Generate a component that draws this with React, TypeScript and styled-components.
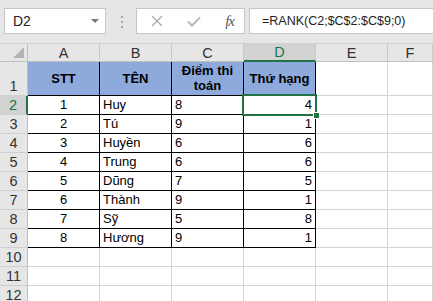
import React from "react";
import styled, { createGlobalStyle } from "styled-components";

const GREEN = "#217346";
const GRID = "#d4d4d4";
const HEAD_BG = "#e6e6e6";
const FONT = `"Liberation Sans", Arial, sans-serif`;

const GlobalStyle = createGlobalStyle`
  html, body {
    margin: 0;
    padding: 0;
    background: #fff;
    overflow: hidden;
  }
  body {
    font-family: ${FONT};
  }
`;

const Window = styled.div`
  width: 433px;
  height: 301px;
  overflow: hidden;
  display: flex;
  flex-direction: column;
  background: #fff;
`;

const FormulaBar = styled.div`
  height: 43px;
  flex: none;
  box-sizing: border-box;
  background: ${HEAD_BG};
  display: flex;
  align-items: flex-start;
  padding: 8px 0 0 4px;
`;

const Field = styled.div`
  height: 26px;
  box-sizing: border-box;
  background: #fff;
  border: 1px solid #c6c6c6;
  display: flex;
  align-items: center;
  font-size: 14px;
  color: #222;
`;

const NameBox = styled(Field)`
  width: 102px;
  flex: none;
  padding: 0 6px 0 8px;
  justify-content: space-between;
`;

const DropArrow = styled.span`
  width: 0;
  height: 0;
  border-left: 4px solid transparent;
  border-right: 4px solid transparent;
  border-top: 4px solid #777;
`;

const Grip = styled.div`
  flex: none;
  display: flex;
  flex-direction: column;
  gap: 3px;
  margin: 8px 13px 0 15px;
  span {
    width: 2px;
    height: 2px;
    background: #a8a8a8;
  }
`;

const ButtonBox = styled(Field)`
  width: 109px;
  flex: none;
  padding: 0 10px 0 14px;
  justify-content: space-between;
`;

const Fx = styled.span`
  font-family: "Liberation Serif", "Times New Roman", serif;
  font-style: italic;
  font-size: 15px;
  color: #555;
  letter-spacing: -1px;
`;

const FormulaInput = styled(Field)`
  flex: 1;
  margin-left: 4px;
  padding-left: 12px;
  border-right: none;
  white-space: nowrap;
  font-size: 12.5px;
`;

const Sheet = styled.div`
  display: grid;
  grid-template-columns: 28px repeat(5, 72px) 1fr;
  grid-template-rows: 19px 34px repeat(11, 19px);
  font-size: 13px;
  color: #000;
`;

const Corner = styled.div`
  position: relative;
  background: ${HEAD_BG};
  border-right: 1px solid #bfbfbf;
  border-bottom: 1px solid #bfbfbf;
  border-top: 1px solid #d0d0d0;
  &::after {
    content: "";
    position: absolute;
    right: 3px;
    bottom: 3px;
    border-left: 11px solid transparent;
    border-bottom: 11px solid #b4b4b4;
  }
`;

const ColHead = styled.div<{ $active?: boolean }>`
  box-sizing: border-box;
  display: flex;
  align-items: center;
  justify-content: center;
  background: ${({ $active }) => ($active ? "#d2d2d2" : HEAD_BG)};
  color: ${({ $active }) => ($active ? GREEN : "#333")};
  border-top: 1px solid #d0d0d0;
  border-right: 1px solid #c8c8c8;
  border-bottom: ${({ $active }) =>
    $active ? `2px solid ${GREEN}` : "1px solid #bfbfbf"};
  font-size: 14.5px;
`;

const RowHead = styled.div<{ $active?: boolean }>`
  box-sizing: border-box;
  display: flex;
  align-items: flex-end;
  justify-content: center;
  background: ${({ $active }) => ($active ? "#d2d2d2" : HEAD_BG)};
  color: ${({ $active }) => ($active ? GREEN : "#333")};
  border-right: ${({ $active }) =>
    $active ? `2px solid ${GREEN}` : "1px solid #bfbfbf"};
  border-bottom: 1px solid #cfcfcf;
  font-size: 14.5px;
  line-height: 18px;
`;

type Align = "left" | "center" | "right";

const Cell = styled.div<{ $align?: Align; $boxed?: boolean; $title?: boolean; $selected?: boolean }>`
  position: relative;
  box-sizing: border-box;
  display: flex;
  align-items: ${({ $title }) => ($title ? "center" : "flex-end")};
  justify-content: ${({ $align }) =>
    $align === "right" ? "flex-end" : $align === "center" ? "center" : "flex-start"};
  text-align: center;
  padding: 0 3px 1px 3px;
  line-height: ${({ $title }) => ($title ? "15px" : "17px")};
  background: ${({ $title }) => ($title ? "#8ea9db" : "#fff")};
  font-weight: ${({ $title }) => ($title ? 700 : 400)};
  border-right: 1px solid ${({ $boxed }) => ($boxed ? "#000" : GRID)};
  border-bottom: 1px solid ${({ $boxed }) => ($boxed ? "#000" : GRID)};
  white-space: ${({ $title }) => ($title ? "normal" : "nowrap")};

  ${({ $selected }) =>
    $selected &&
    `
    &::after {
      content: "";
      position: absolute;
      top: -2px;
      left: -2px;
      right: -2px;
      bottom: -2px;
      border: 2px solid ${GREEN};
      z-index: 2;
    }
    &::before {
      content: "";
      position: absolute;
      right: -5px;
      bottom: -5px;
      width: 5px;
      height: 5px;
      background: ${GREEN};
      border: 1px solid #fff;
      z-index: 3;
    }
  `}
`;

const columns = ["A", "B", "C", "D", "E", "F"];

const scores = [
  { stt: 1, name: "Huy", score: 8, rank: 4 },
  { stt: 2, name: "Tú", score: 9, rank: 1 },
  { stt: 3, name: "Huyền", score: 6, rank: 6 },
  { stt: 4, name: "Trung", score: 6, rank: 6 },
  { stt: 5, name: "Dũng", score: 7, rank: 5 },
  { stt: 6, name: "Thành", score: 9, rank: 1 },
  { stt: 7, name: "Sỹ", score: 5, rank: 8 },
  { stt: 8, name: "Hương", score: 9, rank: 1 },
];

const CloseIcon = () => (
  <svg width="12" height="12" viewBox="0 0 12 12">
    <path d="M1 1 L11 11 M11 1 L1 11" stroke="#aaa" strokeWidth="1.3" fill="none" />
  </svg>
);

const CheckIcon = () => (
  <svg width="14" height="11" viewBox="0 0 14 11">
    <path d="M1 5.5 L5 9.5 L13 1.5" stroke="#bdbdbd" strokeWidth="2.2" fill="none" />
  </svg>
);

const App = () => {
  return (
    <Window>
      <GlobalStyle />
      <FormulaBar>
        <NameBox>
          <span>D2</span>
          <DropArrow />
        </NameBox>
        <Grip>
          <span />
          <span />
          <span />
        </Grip>
        <ButtonBox>
          <CloseIcon />
          <CheckIcon />
          <Fx>fx</Fx>
        </ButtonBox>
        <FormulaInput>=RANK(C2;$C$2:$C$9;0)</FormulaInput>
      </FormulaBar>

      <Sheet>
        <Corner />
        {columns.map((c) => (
          <ColHead key={c} $active={c === "D"}>
            {c}
          </ColHead>
        ))}

        <RowHead>1</RowHead>
        <Cell $title $boxed $align="center">STT</Cell>
        <Cell $title $boxed $align="center">TÊN</Cell>
        <Cell $title $boxed $align="center">Điểm thi toán</Cell>
        <Cell $title $boxed $align="center">Thứ hạng</Cell>
        <Cell />
        <Cell />

        {scores.map((row, i) => (
          <React.Fragment key={row.stt}>
            <RowHead $active={i === 0}>{i + 2}</RowHead>
            <Cell $boxed $align="center">{row.stt}</Cell>
            <Cell $boxed>{row.name}</Cell>
            <Cell $boxed>{row.score}</Cell>
            <Cell $boxed $align="right" $selected={i === 0}>
              {row.rank}
            </Cell>
            <Cell />
            <Cell />
          </React.Fragment>
        ))}

        {[10, 11, 12].map((n) => (
          <React.Fragment key={n}>
            <RowHead>{n}</RowHead>
            {columns.map((c) => (
              <Cell key={c} />
            ))}
          </React.Fragment>
        ))}
      </Sheet>
    </Window>
  );
};

export default App;
